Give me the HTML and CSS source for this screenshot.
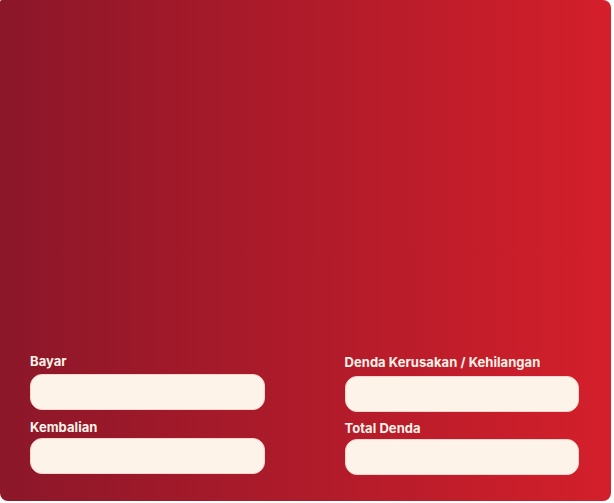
FILE: index.html
```html
<!DOCTYPE html>
<html lang="id">
<head>
<meta charset="utf-8">
<title>Pembayaran</title>
<link rel="stylesheet" href="styles.css">
</head>
<body>
  <div class="card">
    <div class="fields">
      <div class="col">
        <div class="field">
          <label class="label" for="bayar">Bayar</label>
          <input class="input" id="bayar" type="text">
        </div>
        <div class="field">
          <label class="label" for="kembalian">Kembalian</label>
          <input class="input" id="kembalian" type="text">
        </div>
      </div>
      <div class="col col-right">
        <div class="field">
          <label class="label" for="denda">Denda Kerusakan / Kehilangan</label>
          <input class="input" id="denda" type="text">
        </div>
        <div class="field">
          <label class="label" for="total">Total Denda</label>
          <input class="input" id="total" type="text">
        </div>
      </div>
    </div>
  </div>
</body>
</html>
```
FILE: styles.css
```css
html, body {
  margin: 0;
  padding: 0;
  background: #ffffff;
}
body {
  font-family: Inter, "Liberation Sans", sans-serif;
}
.card {
  width: 611px;
  height: 501px;
  box-sizing: border-box;
  border-radius: 2px 8px 8px 8px;
  background: linear-gradient(90deg, #8b1729 0%, #d41f2b 100%);
  display: flex;
  flex-direction: column;
  justify-content: flex-end;
  padding: 0 32px 27px 30px;
}
.fields {
  display: grid;
  grid-template-columns: 1fr 1fr;
  column-gap: 80px;
  align-items: end;
}
.col {
  display: flex;
  flex-direction: column;
  gap: 9px;
}
.col-right {
  gap: 8px;
  margin-bottom: -1px;
}
.field {
  display: flex;
  flex-direction: column;
}
.label {
  font-size: 13px;
  line-height: 16px;
  font-weight: 700;
  letter-spacing: 0.05px;
  color: #fdf3e8;
  margin-bottom: 5px;
}
.col-right .label {
  margin-bottom: 6px;
}
.field + .field .label,
.col-right .field + .field .label {
  margin-bottom: 3px;
}
.input {
  display: block;
  width: 100%;
  box-sizing: border-box;
  height: 36px;
  border: 1px solid #f4d6cf;
  border-radius: 12px;
  background: #fdf3e8;
  outline: none;
  padding: 0 12px;
  font-family: inherit;
  font-size: 13px;
}
```
